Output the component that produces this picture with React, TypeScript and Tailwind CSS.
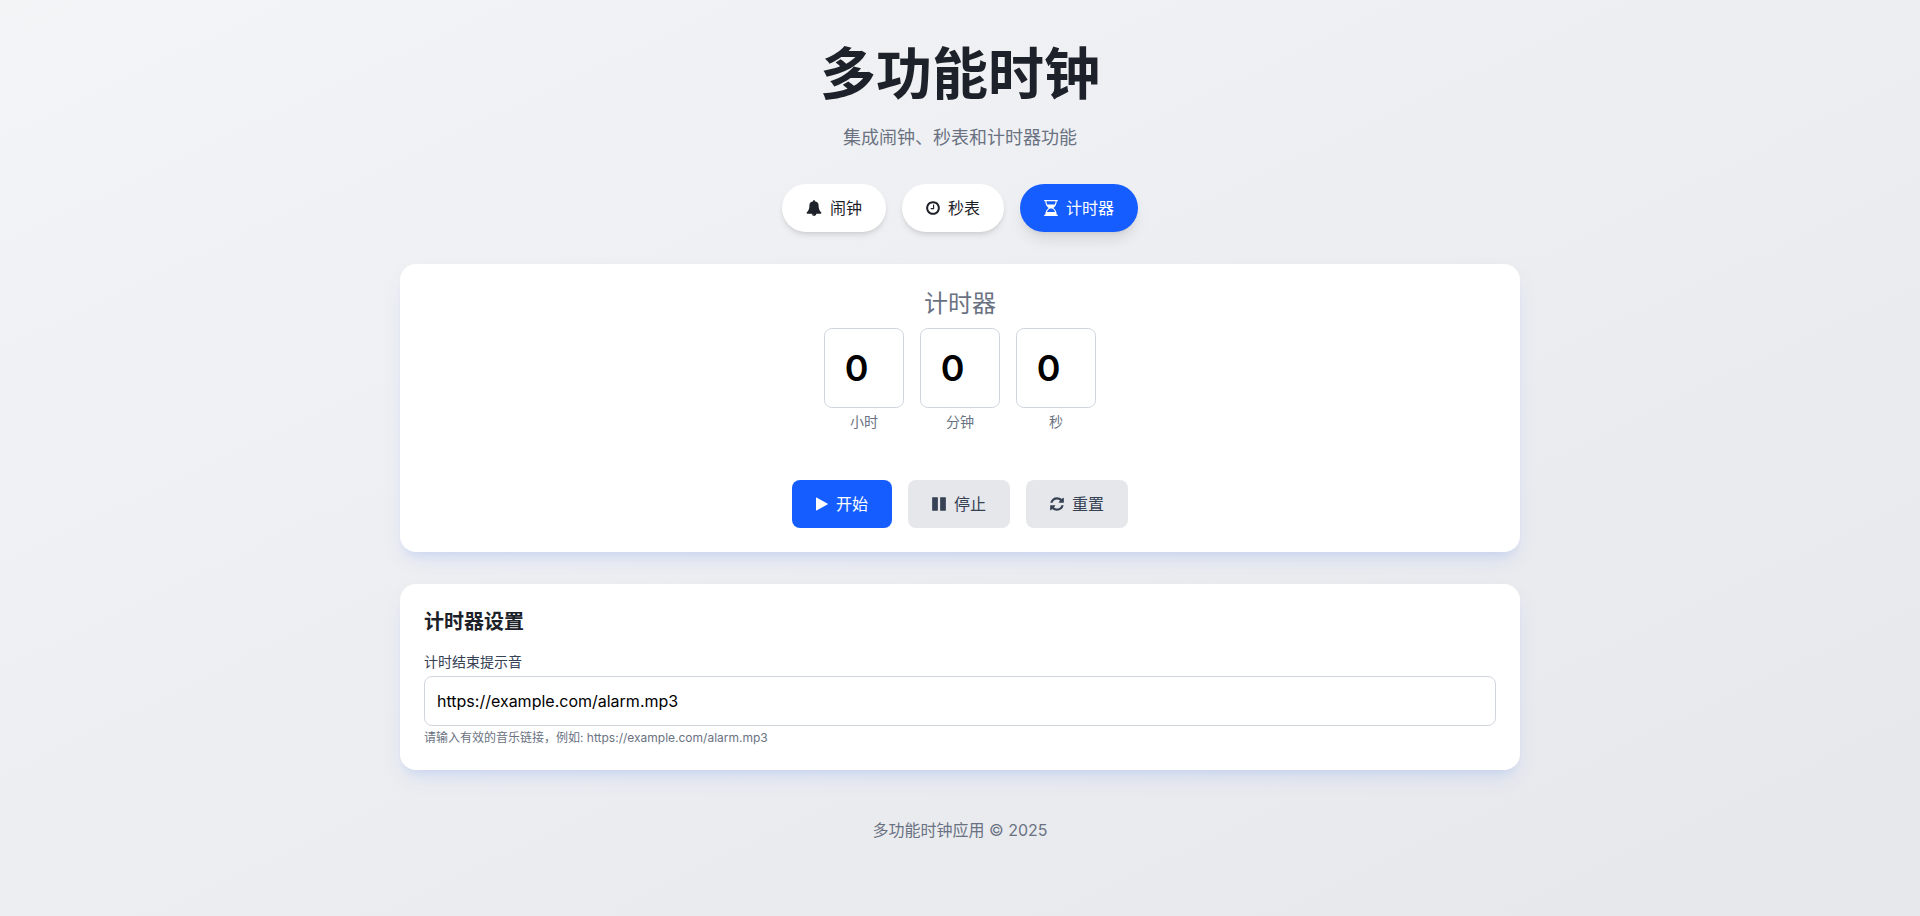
import { useState } from "react";
import clsx from "clsx";

interface IconProps {
  path: string;
  viewBox: string;
  className: string;
}

const ICONS = {
  bell: {
    viewBox: "0 0 1792 1792",
    className: "w-4 h-4",
    path: "M912 1696q0-16-16-16-59 0-101.5-42.5t-42.5-101.5q0-16-16-16t-16 16q0 73 51.5 124.5t124.5 51.5q16 0 16-16zm816-288q0 52-38 90t-90 38h-448q0 106-75 181t-181 75-181-75-75-181h-448q-52 0-90-38t-38-90q50-42 91-88t85-119.5 74.5-158.5 50-206 19.5-260q0-152 117-282.5t307-158.5q-8-19-8-39 0-40 28-68t68-28 68 28 28 68q0 20-8 39 190 28 307 158.5t117 282.5q0 139 19.5 260t50 206 74.5 158.5 85 119.5 91 88z",
  },
  clock: {
    viewBox: "128 0 1536 1792",
    className: "w-[14px] h-4",
    path: "M1024 544v448q0 14-9 23t-23 9h-320q-14 0-23-9t-9-23v-64q0-14 9-23t23-9h224v-352q0-14 9-23t23-9h64q14 0 23 9t9 23zm416 352q0-148-73-273t-198-198-273-73-273 73-198 198-73 273 73 273 198 198 273 73 273-73 198-198 73-273zm224 0q0 209-103 385.5t-279.5 279.5-385.5 103-385.5-103-279.5-279.5-103-385.5 103-385.5 279.5-279.5 385.5-103 385.5 103 279.5 279.5 103 385.5z",
  },
  hourglass: {
    viewBox: "128 0 1536 1792",
    className: "w-[14px] h-4",
    path: "M1536 128q0 261-106.500 461.500t-266.500 306.500q160 106 266.500 306.500t106.500 461.500h96q14 0 23 9t9 23v64q0 14-9 23t-23 9h-1472q-14 0-23-9t-9-23v-64q0-14 9-23t23-9h96q0-261 106.500-461.500t266.500-306.500q-160-106-266.500-306.500t-106.500-461.500h-96q-14 0-23-9t-9-23v-64q0-14 9-23t23-9h1472q14 0 23 9t9 23v64q0 14-9 23t-23 9h-96zm-128 0h-1024q0 206 85 384h854q85-178 85-384zm-57 1216q-54-141-145.500-241.500t-194.500-142.500h-230q-103 42-194.500 142.500t-145.500 241.500h910z",
  },
  play: {
    viewBox: "192 0 1408 1792",
    className: "w-3 h-4",
    path: "M1576 927l-1328 738q-23 13-39.500 3t-16.500-36v-1472q0-26 16.500-36t39.500 3l1328 738q23 13 23 31t-23 31z",
  },
  pause: {
    viewBox: "128 0 1536 1792",
    className: "w-[14px] h-4",
    path: "M1664 192v1408q0 26-19 45t-45 19h-512q-26 0-45-19t-19-45v-1408q0-26 19-45t45-19h512q26 0 45 19t19 45zm-896 0v1408q0 26-19 45t-45 19h-512q-26 0-45-19t-19-45v-1408q0-26 19-45t45-19h512q26 0 45 19t19 45z",
  },
  refresh: {
    viewBox: "128 0 1536 1792",
    className: "w-[14px] h-4",
    path: "M1639 1056q0 5-1 7-64 268-268 434.500t-478 166.500q-146 0-282.500-55t-243.500-157l-129 129q-19 19-45 19t-45-19-19-45v-448q0-26 19-45t45-19h448q26 0 45 19t19 45-19 45l-137 137q71 66 161 102t187 36q134 0 250-65t186-179q11-17 53-117 8-23 30-23h192q13 0 22.500 9.500t9.500 22.500zm25-800v448q0 26-19 45t-45 19h-448q-26 0-45-19t-19-45 19-45l138-138q-148-137-349-137-134 0-250 65t-186 179q-11 17-53 117-8 23-30 23h-199q-13 0-22.500-9.500t-9.500-22.500v-7q65-268 270-434.500t480-166.500q146 0 284 55.500t245 156.500l130-129q19-19 45-19t45 19 19 45z",
  },
};

const tabs = [
  { id: "alarm", label: "闹钟", icon: ICONS.bell },
  { id: "stopwatch", label: "秒表", icon: ICONS.clock },
  { id: "timer", label: "计时器", icon: ICONS.hourglass },
];

const timeFields = [
  { id: "hours", label: "小时", max: 23 },
  { id: "minutes", label: "分钟", max: 59 },
  { id: "seconds", label: "秒", max: 59 },
];

const controls = [
  { label: "开始", icon: ICONS.play, primary: true },
  { label: "停止", icon: ICONS.pause, primary: false },
  { label: "重置", icon: ICONS.refresh, primary: false },
];

const Icon = ({ path, viewBox, className }: IconProps) => (
  <svg viewBox={viewBox} className={className} fill="currentColor" aria-hidden="true">
    <path d={path} />
  </svg>
);

const Card = ({ children }: { children: React.ReactNode }) => (
  <section className="bg-white rounded-2xl p-6 mb-8 shadow-[0_10px_25px_-5px_rgba(22,93,255,0.1),0_8px_10px_-6px_rgba(22,93,255,0.1)]">
    {children}
  </section>
);

export default function App() {
  const [activeTab, setActiveTab] = useState("timer");

  return (
    <div className="min-h-screen bg-linear-to-br from-gray-100 to-gray-200 text-[#1d2129] font-['Inter','Noto_Sans_CJK_SC',sans-serif]">
      <div className="max-w-6xl mx-auto px-4 py-8">
        <header className="text-center mb-8">
          <h1 className="text-[56px] leading-[84px] font-bold mb-2">多功能时钟</h1>
          <p className="text-lg text-gray-500">集成闹钟、秒表和计时器功能</p>
        </header>

        <nav className="flex flex-wrap justify-center gap-4 mb-8">
          {tabs.map((tab) => (
            <button
              key={tab.id}
              type="button"
              onClick={() => setActiveTab(tab.id)}
              className={clsx(
                "flex items-center gap-2 px-6 py-3 rounded-full",
                activeTab === tab.id
                  ? "bg-[#165dff] text-white shadow-lg"
                  : "bg-white shadow-md"
              )}
            >
              <Icon {...tab.icon} />
              {tab.label}
            </button>
          ))}
        </nav>

        <main>
          <Card>
            <h2 className="text-2xl text-gray-500 text-center mb-2">计时器</h2>
            <div className="flex justify-center gap-4 mb-12">
              {timeFields.map((field) => (
                <div key={field.id} className="flex flex-col items-center gap-1">
                  <input
                    id={field.id}
                    type="number"
                    min={0}
                    max={field.max}
                    defaultValue={0}
                    className="w-20 h-20 p-4 text-4xl font-semibold text-black text-center border border-gray-300 rounded-lg"
                  />
                  <label htmlFor={field.id} className="text-sm text-gray-500">
                    {field.label}
                  </label>
                </div>
              ))}
            </div>
            <div className="flex flex-wrap justify-center gap-4">
              {controls.map((control) => (
                <button
                  key={control.label}
                  type="button"
                  className={clsx(
                    "flex items-center gap-2 px-6 py-3 rounded-lg",
                    control.primary ? "bg-[#165dff] text-white" : "bg-gray-200 text-gray-700"
                  )}
                >
                  <Icon {...control.icon} />
                  {control.label}
                </button>
              ))}
            </div>
          </Card>

          <Card>
            <h3 className="text-xl font-bold mb-4">计时器设置</h3>
            <label htmlFor="sound" className="block text-sm text-gray-700 mb-1">
              计时结束提示音
            </label>
            <input
              id="sound"
              type="url"
              defaultValue="https://example.com/alarm.mp3"
              className="block w-full p-3 text-black border border-gray-300 rounded-lg"
            />
            <p className="text-xs text-gray-500 mt-1">
              请输入有效的音乐链接，例如: https://example.com/alarm.mp3
            </p>
          </Card>
        </main>

        <footer className="text-center text-gray-500 mt-12">多功能时钟应用 © 2025</footer>
      </div>
    </div>
  );
}
